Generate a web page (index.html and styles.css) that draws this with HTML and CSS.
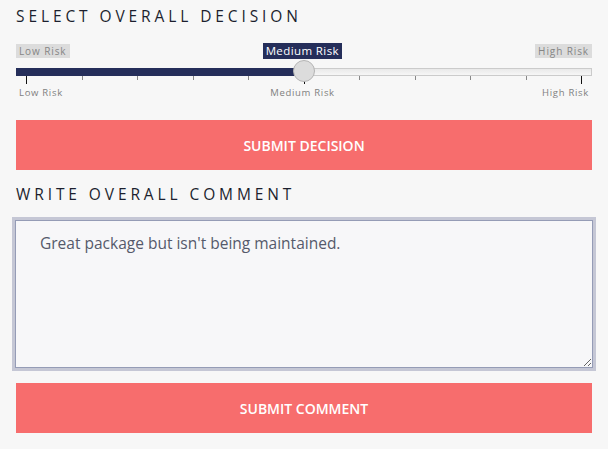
FILE: index.html
```html
<!DOCTYPE html>
<html>
<head>
<meta charset="utf-8">
<link rel="stylesheet" href="styles.css">
</head>
<body>
<div class="page">
  <h2 class="heading">SELECT OVERALL DECISION</h2>
  <div class="slider">
    <div class="slider-top">
      <span class="pill">Low Risk</span>
      <span class="pill pill-active">Medium Risk</span>
      <span class="pill">High Risk</span>
    </div>
    <div class="track">
      <div class="fill" style="width:50%"></div>
      <div class="thumb" style="left:50%"></div>
    </div>
    <div class="ticks">
      <span class="tick major"></span><span class="tick"></span><span class="tick"></span><span class="tick"></span><span class="tick"></span>
      <span class="tick major"></span><span class="tick"></span><span class="tick"></span><span class="tick"></span><span class="tick"></span>
      <span class="tick major"></span>
    </div>
    <div class="scale">
      <span>Low Risk</span>
      <span>Medium Risk</span>
      <span>High Risk</span>
    </div>
  </div>
  <button class="btn">SUBMIT DECISION</button>
  <h2 class="heading heading-2">WRITE OVERALL COMMENT</h2>
  <div class="comment-wrap">
    <textarea class="comment">Great package but isn't being maintained.</textarea>
  </div>
  <button class="btn btn-2">SUBMIT COMMENT</button>
</div>
</body>
</html>
```

FILE: styles.css
```css
html, body {
  margin: 0;
  padding: 0;
  background: #f7f7f7;
}
.page {
  padding: 6px 16px 0 16px;
  font-family: "Open Sans", "Noto Sans", sans-serif;
}
.heading {
  margin: 0;
  font-weight: 400;
  font-size: 15.5px;
  letter-spacing: 3.9px;
  color: #1c1f2e;
  line-height: 21px;
}
.heading-2 {
  margin-top: 14px;
}
.slider {
  margin-top: 16px;
}
.slider-top {
  display: flex;
  justify-content: space-between;
  align-items: center;
  height: 15px;
}
.pill {
  background: #dcdcdc;
  color: #858585;
  font-size: 10px;
  letter-spacing: 0.9px;
  padding: 0 3px;
  line-height: 14px;
}
.pill-active {
  background: #252e5a;
  color: #ffffff;
  font-size: 11.5px;
  letter-spacing: 0.4px;
  line-height: 16px;
  padding: 0 3px;
}
.track {
  position: relative;
  margin-top: 10px;
  height: 6px;
  border: 1px solid #cbcbcb;
  background: linear-gradient(#e9e9e9, #f6f6f6);
}
.fill {
  position: absolute;
  left: -1px;
  top: -1px;
  bottom: -1px;
  background: #252e5a;
}
.thumb {
  position: absolute;
  top: 50%;
  width: 20px;
  height: 20px;
  margin-left: -11px;
  margin-top: -12px;
  border-radius: 50%;
  background: #dcdcdc;
  border: 1px solid #b4b4b4;
}
.ticks {
  display: flex;
  justify-content: space-between;
  padding: 0 10px 0 10px;
  height: 8px;
  align-items: flex-start;
}
.tick {
  width: 1px;
  height: 4px;
  background: #888;
}
.tick.major {
  height: 8px;
  background: #111;
}
.scale {
  display: flex;
  justify-content: space-between;
  padding: 0 3px;
  font-size: 9.5px;
  letter-spacing: 0.7px;
  color: #808080;
  line-height: 14px;
  margin-top: 2px;
}
.btn {
  display: block;
  width: 100%;
  height: 50px;
  margin-top: 20px;
  border: 0;
  background: #f76d6d;
  color: #ffffff;
  font-family: "Open Sans", "Noto Sans", sans-serif;
  font-size: 14px;
  font-weight: 600;
  letter-spacing: 0;
}
.btn-2 {
  margin-top: 12px;
}
.comment-wrap {
  margin: 12px -4px 0 -4px;
  border: 3px solid #c5c7d5;
}
.comment {
  display: block;
  box-sizing: border-box;
  width: 100%;
  height: 148px;
  margin: 0;
  border: 1px solid #959cb6;
  background: #f7f7f9;
  padding: 11px 24px;
  font-family: "Open Sans", "Noto Sans", sans-serif;
  font-size: 15.5px;
  color: #555a6b;
  outline: none;
  resize: vertical;
}
```
